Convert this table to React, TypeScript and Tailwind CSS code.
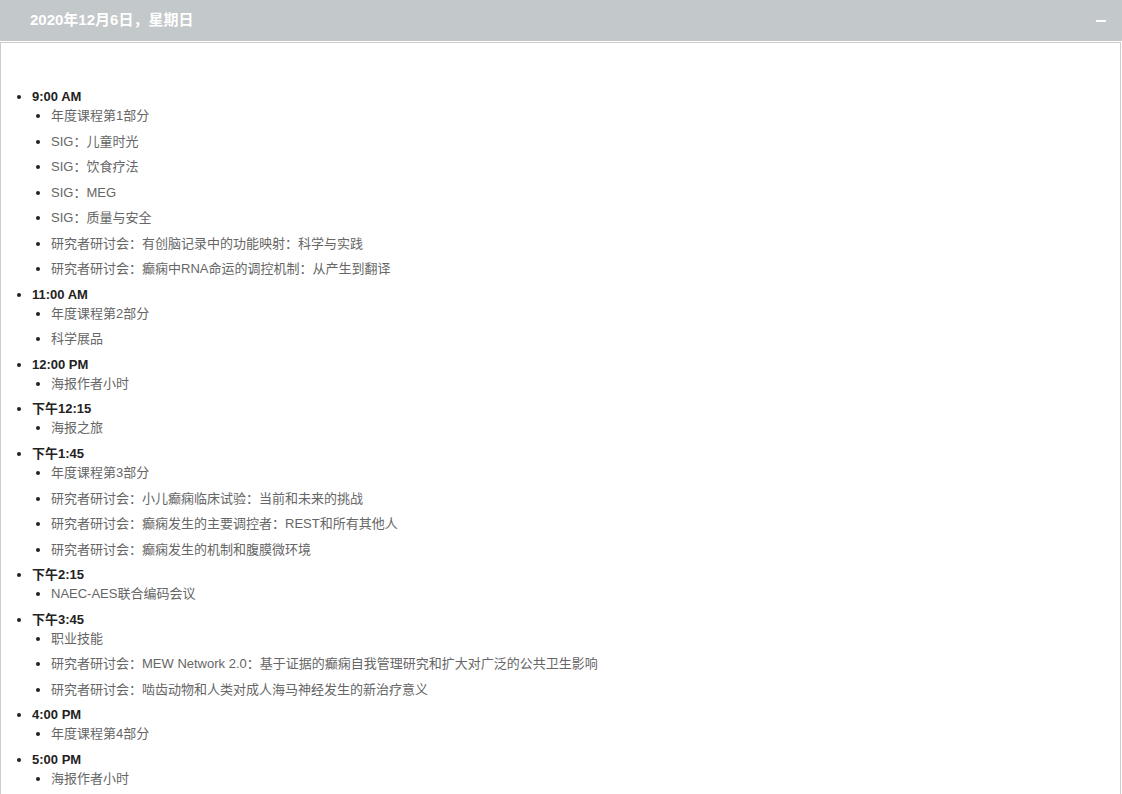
const schedule: { time: string; items: string[] }[] = [
  {
    time: '9:00 AM',
    items: [
      '年度课程第1部分',
      'SIG：儿童时光',
      'SIG：饮食疗法',
      'SIG：MEG',
      'SIG：质量与安全',
      '研究者研讨会：有创脑记录中的功能映射：科学与实践',
      '研究者研讨会：癫痫中RNA命运的调控机制：从产生到翻译',
    ],
  },
  { time: '11:00 AM', items: ['年度课程第2部分', '科学展品'] },
  { time: '12:00 PM', items: ['海报作者小时'] },
  { time: '下午12:15', items: ['海报之旅'] },
  {
    time: '下午1:45',
    items: [
      '年度课程第3部分',
      '研究者研讨会：小儿癫痫临床试验：当前和未来的挑战',
      '研究者研讨会：癫痫发生的主要调控者：REST和所有其他人',
      '研究者研讨会：癫痫发生的机制和腹膜微环境',
    ],
  },
  { time: '下午2:15', items: ['NAEC-AES联合编码会议'] },
  {
    time: '下午3:45',
    items: [
      '职业技能',
      '研究者研讨会：MEW Network 2.0：基于证据的癫痫自我管理研究和扩大对广泛的公共卫生影响',
      '研究者研讨会：啮齿动物和人类对成人海马神经发生的新治疗意义',
    ],
  },
  { time: '4:00 PM', items: ['年度课程第4部分'] },
  { time: '5:00 PM', items: ['海报作者小时'] },
];

export default function App() {
  return (
    <div
      className="w-[1122px] h-[794px] overflow-hidden bg-white"
      style={{ fontFamily: '"Liberation Sans", Arial, "Noto Sans CJK SC", sans-serif' }}
    >
      <div className="h-[41px] bg-[#c3c8ca] flex items-center justify-between pl-[30px] pr-[16px]">
        <span className="text-white font-bold text-[15px]">2020年12月6日，星期日</span>
        <span className="block w-[10px] h-[2px] bg-white" />
      </div>
      <div className="mt-[1px] w-[1121px] border border-[#cccccc] pt-[44px] pb-10">
        <ul className="list-disc pl-[31px] text-[13px] text-[#222]">
          {schedule.map((s) => (
            <li key={s.time} className="leading-[19px]">
              <span className="font-bold">{s.time}</span>
              <ul className="list-disc pl-[19px]">
                {s.items.map((it, i) => (
                  <li key={i} className="leading-[19px] mb-[6.56px]">
                    <span className="text-[#666]">{it}</span>
                  </li>
                ))}
              </ul>
            </li>
          ))}
        </ul>
      </div>
    </div>
  );
}
